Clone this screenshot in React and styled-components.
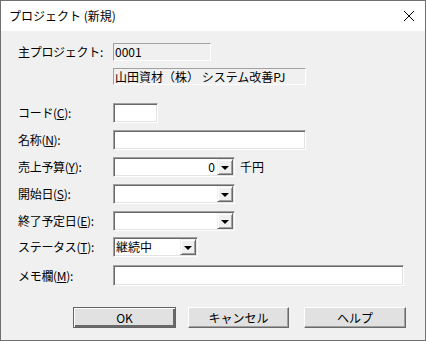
import styled, { createGlobalStyle } from "styled-components";

const GlobalStyle = createGlobalStyle`
    body {
        margin: 0;
        background: #ffffff;
        font-family: "Noto Sans CJK JP", "Noto Sans", sans-serif;
        font-size: 12px;
        color: #000;
    }
`;

const Window = styled.div`
    width: 426px;
    height: 341px;
    box-sizing: border-box;
    border: 1px solid #707070;
    display: flex;
    flex-direction: column;
    background: #f0f0f0;
`;

const TitleBar = styled.div`
    height: 30px;
    background: #ffffff;
    display: flex;
    align-items: center;
    justify-content: space-between;
    padding: 0 10px 0 8px;
    font-size: 12px;
    line-height: 14px;
`;

const CloseIcon = styled.svg`
    width: 12px;
    height: 12px;
`;

const Body = styled.div`
    flex: 1;
    display: flex;
    flex-direction: column;
    padding: 12px 0 0 17px;
`;

const Row = styled.div`
    display: flex;
    align-items: center;
    margin-top: ${p => p.$top || 0}px;
    height: ${p => p.$h || 20}px;
`;

const Label = styled.div`
    width: 95px;
    flex: none;
    font-size: 12px;
    line-height: 14px;
    white-space: nowrap;
    letter-spacing: -0.3px;
`;

const ReadOnly = styled.div`
    width: ${p => p.$w}px;
    height: ${p => p.$h}px;
    box-sizing: border-box;
    border: 1px solid;
    border-color: #a0a0a0 #ffffff #ffffff #a0a0a0;
    background: #f0f0f0;
    padding-left: 1px;
    font-size: 12px;
    line-height: ${p => p.$h - 2}px;
    white-space: nowrap;
    overflow: hidden;
`;

const Field = styled.div`
    width: ${p => p.$w}px;
    height: ${p => p.$h || 20}px;
    box-sizing: border-box;
    border: 1px solid;
    border-color: #a0a0a0 #ffffff #ffffff #a0a0a0;
    box-shadow: inset 1px 1px 0 #696969, inset -1px -1px 0 #e3e3e3;
    background: #ffffff;
    display: flex;
    align-items: center;
    padding: 2px;
`;

const FieldText = styled.div`
    flex: 1;
    font-size: 12px;
    line-height: 14px;
    text-align: ${p => (p.$right ? "right" : "left")};
    padding-right: ${p => (p.$right ? 2 : 0)}px;
    white-space: nowrap;
`;

const DropButton = styled.div`
    width: 16px;
    height: 16px;
    box-sizing: border-box;
    background: #f0f0f0;
    border: 1px solid;
    border-color: #f0f0f0 #696969 #696969 #f0f0f0;
    box-shadow: inset 1px 1px 0 #ffffff, inset -1px -1px 0 #a0a0a0;
    display: flex;
    align-items: center;
    justify-content: center;
    flex: none;
    margin-right: -1px;
`;

const Arrow = styled.div`
    width: 0;
    height: 0;
    border-left: 4px solid transparent;
    border-right: 4px solid transparent;
    border-top: 4px solid #000;
    margin-top: 1px;
`;

const Unit = styled.div`
    margin-left: 5px;
    font-size: 12px;
    line-height: 14px;
`;

const Buttons = styled.div`
    display: flex;
    margin-top: 21px;
    padding-left: 55px;
    gap: 12px;
`;

const Button = styled.div`
    width: ${p => p.$w}px;
    height: 21px;
    box-sizing: border-box;
    margin-left: ${p => p.$ml || 0}px;
    background: #e1e1e1;
    border: 1px solid;
    border-color: ${p => (p.$default ? "#646464" : "#ffffff #696969 #696969 #ffffff")};
    box-shadow: ${p =>
        p.$default
            ? "inset 1px 1px 0 #ffffff, inset -2px -2px 0 #696969"
            : "inset -1px -1px 0 #a0a0a0"};
    display: flex;
    align-items: center;
    justify-content: center;
    font-size: 12px;
    line-height: 14px;
`;

const Combo = ({ w, text, right }) => (
    <Field $w={w}>
        <FieldText $right={right}>{text}</FieldText>
        <DropButton>
            <Arrow />
        </DropButton>
    </Field>
);

const App = () => {
    return (
        <Window>
            <GlobalStyle />
            <TitleBar>
                <span>プロジェクト (新規)</span>
                <CloseIcon viewBox="0 0 12 12">
                    <path d="M1 1 L11 11 M11 1 L1 11" stroke="#000" strokeWidth="1" fill="none" />
                </CloseIcon>
            </TitleBar>
            <Body>
                <Row $h={18}>
                    <Label>主プロジェクト:</Label>
                    <ReadOnly $w={98} $h={18}>0001</ReadOnly>
                </Row>
                <Row $top={7} $h={17}>
                    <Label />
                    <ReadOnly $w={193} $h={17}>山田資材（株） システム改善PJ</ReadOnly>
                </Row>
                <Row $top={18}>
                    <Label>コード(<u>C</u>):</Label>
                    <Field $w={45} />
                </Row>
                <Row $top={7}>
                    <Label>名称(<u>N</u>):</Label>
                    <Field $w={193} />
                </Row>
                <Row $top={7}>
                    <Label>売上予算(<u>Y</u>):</Label>
                    <Combo w={122} text="0" right />
                    <Unit>千円</Unit>
                </Row>
                <Row $top={7}>
                    <Label>開始日(<u>S</u>):</Label>
                    <Combo w={122} />
                </Row>
                <Row $top={7}>
                    <Label>終了予定日(<u>E</u>):</Label>
                    <Combo w={122} />
                </Row>
                <Row $top={6}>
                    <Label>ステータス(<u>T</u>):</Label>
                    <Combo w={85} text="継続中" />
                </Row>
                <Row $top={8} $h={21}>
                    <Label>メモ欄(<u>M</u>):</Label>
                    <Field $w={291} $h={21} />
                </Row>
                <Buttons>
                    <Button $w={103} $default>OK</Button>
                    <Button $w={101}>キャンセル</Button>
                    <Button $w={102} $ml={3}>ヘルプ</Button>
                </Buttons>
            </Body>
        </Window>
    );
};

export default App;
